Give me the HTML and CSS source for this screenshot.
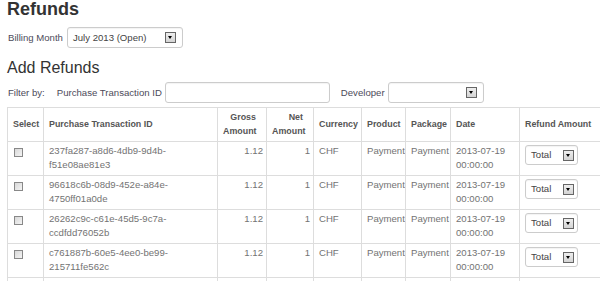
FILE: index.html
```html
<!DOCTYPE html>
<html lang="en">
<head>
  <meta charset="UTF-8">
  <title>Refunds</title>
  <meta name="viewport" content="width=device-width, initial-scale=1.0">
  <link rel="stylesheet" href="styles.css">
</head>
<body>
  <div class="page">
    <h1 class="page-title">Refunds</h1>
    <div class="billing-row">
      <label class="field-label">Billing Month</label>
      <span class="combo combo-month">
        <span class="combo-text">July 2013 (Open)</span>
        <span class="combo-btn"></span>
      </span>
    </div>

    <h2 class="section-title">Add Refunds</h2>
    <div class="filter-row">
      <span class="field-label filter-by">Filter by:</span>
      <label class="field-label" for="ptid">Purchase Transaction ID</label>
      <input type="text" id="ptid" class="text-input">
      <label class="field-label dev-label">Developer</label>
      <span class="combo combo-dev">
        <span class="combo-text"></span>
        <span class="combo-btn"></span>
      </span>
    </div>

    <table class="refunds-table">
      <colgroup>
        <col class="c-select">
        <col class="c-id">
        <col class="c-gross">
        <col class="c-net">
        <col class="c-cur">
        <col class="c-prod">
        <col class="c-pack">
        <col class="c-date">
        <col class="c-refund">
      </colgroup>
      <thead>
        <tr>
          <th>Select</th>
          <th>Purchase Transaction ID</th>
          <th class="num">Gross Amount</th>
          <th class="num">Net Amount</th>
          <th>Currency</th>
          <th>Product</th>
          <th>Package</th>
          <th>Date</th>
          <th>Refund Amount</th>
        </tr>
      </thead>
      <tbody>
        <tr>
          <td><input type="checkbox" class="check"></td>
          <td>237fa287-a8d6-4db9-9d4b-<br>f51e08ae81e3</td>
          <td class="num">1.12</td>
          <td class="num">1</td>
          <td>CHF</td>
          <td>Payment</td>
          <td>Payment</td>
          <td>2013-07-19<br>00:00:00</td>
          <td><span class="combo combo-total"><span class="combo-text">Total</span><span class="combo-btn"></span></span></td>
        </tr>
        <tr>
          <td><input type="checkbox" class="check"></td>
          <td>96618c6b-08d9-452e-a84e-<br>4750ff01a0de</td>
          <td class="num">1.12</td>
          <td class="num">1</td>
          <td>CHF</td>
          <td>Payment</td>
          <td>Payment</td>
          <td>2013-07-19<br>00:00:00</td>
          <td><span class="combo combo-total"><span class="combo-text">Total</span><span class="combo-btn"></span></span></td>
        </tr>
        <tr>
          <td><input type="checkbox" class="check"></td>
          <td>26262c9c-c61e-45d5-9c7a-<br>ccdfdd76052b</td>
          <td class="num">1.12</td>
          <td class="num">1</td>
          <td>CHF</td>
          <td>Payment</td>
          <td>Payment</td>
          <td>2013-07-19<br>00:00:00</td>
          <td><span class="combo combo-total"><span class="combo-text">Total</span><span class="combo-btn"></span></span></td>
        </tr>
        <tr>
          <td><input type="checkbox" class="check"></td>
          <td>c761887b-60e5-4ee0-be99-<br>215711fe562c</td>
          <td class="num">1.12</td>
          <td class="num">1</td>
          <td>CHF</td>
          <td>Payment</td>
          <td>Payment</td>
          <td>2013-07-19<br>00:00:00</td>
          <td><span class="combo combo-total"><span class="combo-text">Total</span><span class="combo-btn"></span></span></td>
        </tr>
        <tr>
          <td><input type="checkbox" class="check"></td>
          <td>&nbsp;<br>&nbsp;</td>
          <td class="num"></td>
          <td class="num"></td>
          <td></td>
          <td></td>
          <td></td>
          <td></td>
          <td></td>
        </tr>
      </tbody>
    </table>
  </div>
</body>
</html>
```

FILE: styles.css
```css
html, body {
  margin: 0;
  padding: 0;
  background: #fff;
  font-family: "Liberation Sans", Arial, sans-serif;
  font-size: 9.6px;
  color: #555;
  overflow: hidden;
}
.page {
  padding: 0 0 0 7px;
}
.page-title {
  margin: 0;
  font-size: 18px;
  line-height: 18px;
  font-weight: bold;
  color: #333;
}
.billing-row {
  display: flex;
  align-items: center;
  gap: 4px;
  margin-top: 9px;
  padding-left: 1px;
}
.field-label {
  color: #4d4b5a;
  white-space: nowrap;
}
.section-title {
  margin: 11px 0 0 0;
  font-size: 16px;
  line-height: 18px;
  font-weight: normal;
  color: #333;
}
.filter-row {
  display: flex;
  align-items: center;
  margin-top: 5px;
  padding-left: 1px;
}
.filter-row .filter-by {
  margin-right: 12px;
}
.text-input {
  box-sizing: border-box;
  width: 165px;
  height: 21px;
  margin: 0 0 0 3px;
  border: 1px solid #ccc;
  border-radius: 3px;
  box-shadow: inset 0 1px 1px #0000000d;
  padding: 0 4px;
  font: inherit;
}
.dev-label {
  margin: 0 3px 0 11px;
}
/* fake select boxes */
.combo {
  box-sizing: border-box;
  display: inline-flex;
  align-items: center;
  justify-content: space-between;
  height: 21px;
  border: 1px solid #ccc;
  border-radius: 3px;
  background: #fff;
  box-shadow: inset 0 1px 1px #0000000d;
  padding: 0 6px 0 5px;
  color: #444;
}
.combo-month {
  width: 116px;
}
.combo-dev {
  width: 96px;
}
.combo-total {
  width: 53px;
  height: 20px;
  padding: 0 3px 0 5px;
  margin-top: 1px;
}
.combo-btn {
  position: relative;
  box-sizing: border-box;
  width: 11px;
  height: 11px;
  border: 1px solid #666;
  background: linear-gradient(#eee, #d4d4d4);
}
.combo-btn::after {
  content: "";
  position: absolute;
  left: 2px;
  top: 3px;
  border-left: 2.5px solid transparent;
  border-right: 2.5px solid transparent;
  border-top: 3px solid #000;
}
/* table */
.refunds-table {
  margin-top: 4px;
  border-collapse: collapse;
  table-layout: fixed;
  width: 612px;
}
.c-select { width: 36px; }
.c-id { width: 174px; }
.c-gross { width: 49px; }
.c-net { width: 47px; }
.c-cur { width: 48px; }
.c-prod { width: 44px; }
.c-pack { width: 45px; }
.c-date { width: 69px; }
.c-refund { width: 100px; }
.refunds-table th,
.refunds-table td {
  border: 1px solid #ddd;
  padding: 2px 3px 3px 5px;
  line-height: 14px;
  text-align: left;
  vertical-align: top;
  white-space: nowrap;
  overflow: hidden;
}
.refunds-table th {
  font-size: 8.9px;
  font-weight: bold;
  color: #555;
  vertical-align: middle;
  height: 28px;
  white-space: normal;
}
.refunds-table td {
  color: #737373;
  height: 28px;
}
.refunds-table .num {
  text-align: right;
}
.refunds-table th.num {
  padding-right: 10px;
}
.refunds-table td.num {
  padding-right: 3px;
}
.check {
  appearance: none;
  -webkit-appearance: none;
  display: block;
  box-sizing: border-box;
  width: 9px;
  height: 9px;
  margin: 4px 0 0 1px;
  border: 1px solid #888;
  background: linear-gradient(135deg, #d8d8d8, #f4f4f4);
}
```
